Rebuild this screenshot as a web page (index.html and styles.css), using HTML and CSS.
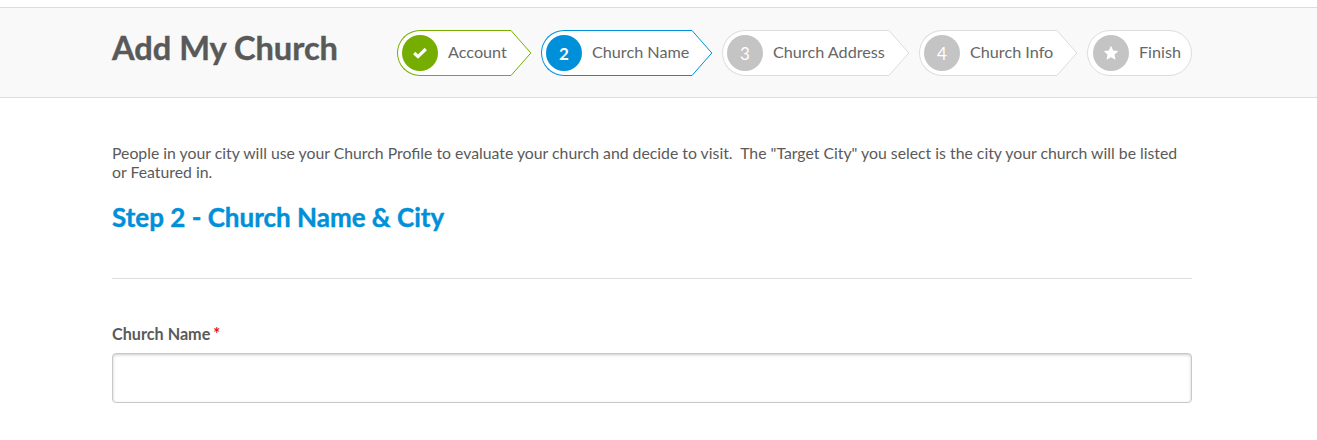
FILE: index.html
```html
<!DOCTYPE html>
<html lang="en">
<head>
    <meta charset="UTF-8">
    <title>Add My Church</title>
    <link rel="stylesheet" href="styles.css">
</head>
<body>
    <div class="header">
        <div class="container header-row">
            <h1>Add My Church</h1>
            <div class="steps">
                <div class="step done">
                    <div class="step-body step-account">
                        <span class="circle">
                            <svg width="14" height="12" viewBox="0 0 14 12"><path d="M1.2 6 5 9.6 12.8 2" fill="none" stroke="#fff" stroke-width="3.2"/></svg>
                        </span>
                        <span class="label">Account</span>
                    </div>
                    <svg class="arrow" width="21" height="46" viewBox="0 0 21 46"><path d="M0 .5H1L20.8 23 1 45.5H0" /></svg>
                </div>
                <div class="step active">
                    <div class="step-body step-name">
                        <span class="circle">2</span>
                        <span class="label">Church Name</span>
                    </div>
                    <svg class="arrow" width="21" height="46" viewBox="0 0 21 46"><path d="M0 .5H1L20.8 23 1 45.5H0" /></svg>
                </div>
                <div class="step">
                    <div class="step-body step-address">
                        <span class="circle">3</span>
                        <span class="label">Church Address</span>
                    </div>
                    <svg class="arrow" width="21" height="46" viewBox="0 0 21 46"><path d="M0 .5H1L20.8 23 1 45.5H0" /></svg>
                </div>
                <div class="step">
                    <div class="step-body step-info">
                        <span class="circle">4</span>
                        <span class="label">Church Info</span>
                    </div>
                    <svg class="arrow" width="21" height="46" viewBox="0 0 21 46"><path d="M0 .5H1L20.8 23 1 45.5H0" /></svg>
                </div>
                <div class="step">
                    <div class="step-body step-finish">
                        <span class="circle">
                            <svg width="16" height="16" viewBox="0 0 16 16"><path d="M8 .8 10.2 5.5 15.3 6.1 11.5 9.6 12.5 14.7 8 12.2 3.5 14.7 4.5 9.6.7 6.1 5.8 5.5Z" fill="#fff"/></svg>
                        </span>
                        <span class="label">Finish</span>
                    </div>
                </div>
            </div>
        </div>
    </div>
    <div class="container content">
        <p class="intro">People in your city will use your Church Profile to evaluate your church and decide to visit.&nbsp; The "Target City" you select is the city your church will be listed or Featured in.</p>
        <h2>Step 2 - Church Name &amp; City</h2>
        <hr>
        <label class="field-label" for="church-name">Church Name<span class="required">*</span></label>
        <input id="church-name" class="field-input" type="text">
    </div>
</body>
</html>
```

FILE: styles.css
```css
* {
    margin: 0;
    padding: 0;
    box-sizing: border-box;
}

body {
    font-family: 'Lato', sans-serif;
    background: #ffffff;
    color: #555555;
    padding-top: 7px;
    overflow: hidden;
}

.container {
    width: 1080px;
    margin-left: 112px;
}

.header {
    height: 91px;
    background: #f9f9f9;
    border-top: 1px solid #dddddd;
    border-bottom: 1px solid #dddddd;
}

.header-row {
    display: flex;
    justify-content: space-between;
    align-items: flex-start;
}

.header h1 {
    font-size: 32.6px;
    font-weight: 700;
    line-height: 40px;
    margin-top: 20px;
    color: #595959;
    -webkit-text-stroke: 0.4px #595959;
}

.steps {
    display: flex;
    gap: 10px;
    margin-top: 22px;
}

.step {
    display: flex;
    --step-color: #dddddd;
}

.step-body {
    display: flex;
    align-items: center;
    height: 46px;
    padding-left: 4px;
    background: #ffffff;
    border: 1px solid var(--step-color);
    border-right: none;
    border-radius: 23px 0 0 23px;
}

.step-account { width: 114px; }
.step-name { width: 151px; }
.step-address { width: 167px; }
.step-info { width: 138px; }

.step-finish {
    width: 105px;
    padding-left: 5px;
    border-right: 1px solid var(--step-color);
    border-radius: 23px;
}

.arrow {
    display: block;
    flex-shrink: 0;
    margin-left: -1px;
    overflow: visible;
}

.arrow path {
    fill: #ffffff;
    stroke: var(--step-color);
    stroke-width: 1;
}

.circle {
    display: flex;
    justify-content: center;
    align-items: center;
    flex-shrink: 0;
    width: 36px;
    height: 36px;
    border-radius: 50%;
    background: #c4c4c4;
    color: #ffffff;
    font-size: 17px;
    font-weight: 400;
}

.label {
    margin-left: 10px;
    margin-bottom: 4px;
    font-size: 16.2px;
    color: #666666;
    white-space: nowrap;
}

.done { --step-color: #75ad00; }
.done .circle { background: #75ad00; }

.active { --step-color: #0090d9; }
.active .circle {
    background: #0090d9;
    font-weight: 700;
}

.content {
    padding-top: 45px;
}

.intro {
    font-size: 15.8px;
    line-height: 19px;
    color: #5a5a5a;
}

.content h2 {
    font-size: 26px;
    font-weight: 700;
    line-height: 32px;
    margin-top: 20px;
    color: #0090d9;
    -webkit-text-stroke: 0.4px #0090d9;
}

.content hr {
    border: none;
    border-top: 1px solid #dddddd;
    margin-top: 45px;
}

.field-label {
    display: block;
    margin-top: 45px;
    font-size: 16.2px;
    font-weight: 700;
    line-height: 20px;
    color: #5a5a5a;
}

.required {
    color: #e0101f;
    margin-left: 3px;
}

.field-input {
    display: block;
    width: 100%;
    height: 50px;
    margin-top: 9px;
    background: #ffffff;
    border: 1px solid #c8c8c8;
    border-radius: 4px;
    box-shadow: inset 0 1px 3px rgba(0, 0, 0, 0.2);
}
```
